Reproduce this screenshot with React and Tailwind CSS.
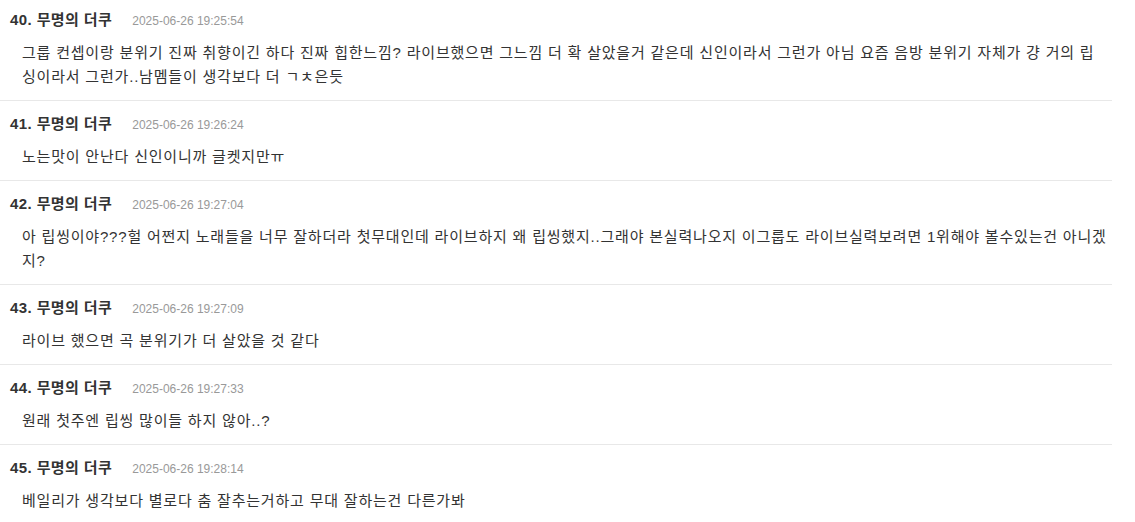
const comments = [
  {
    no: 40,
    time: "2025-06-26 19:25:54",
    text: "그룹 컨셉이랑 분위기 진짜 취향이긴 하다 진짜 힙한느낌? 라이브했으면 그느낌 더 확 살았을거 같은데 신인이라서 그런가 아님 요즘 음방 분위기 자체가 걍 거의 립싱이라서 그런가..남멤들이 생각보다 더 ㄱㅊ은듯",
  },
  { no: 41, time: "2025-06-26 19:26:24", text: "노는맛이 안난다 신인이니까 글켓지만ㅠ" },
  {
    no: 42,
    time: "2025-06-26 19:27:04",
    text: "아 립씽이야???헐 어쩐지 노래들을 너무 잘하더라 첫무대인데 라이브하지 왜 립씽했지..그래야 본실력나오지 이그룹도 라이브실력보려면 1위해야 볼수있는건 아니겠지?",
  },
  { no: 43, time: "2025-06-26 19:27:09", text: "라이브 했으면 곡 분위기가 더 살았을 것 같다" },
  { no: 44, time: "2025-06-26 19:27:33", text: "원래 첫주엔 립씽 많이들 하지 않아..?" },
  { no: 45, time: "2025-06-26 19:28:14", text: "베일리가 생각보다 별로다 춤 잘추는거하고 무대 잘하는건 다른가봐" },
];

function Comment({ no, time, text }) {
  return (
    <div className="pl-[10px] pr-[5px] pt-[13px] pb-[11px] first:pt-[10px] border-b border-[#e8e8e8]">
      <div className="flex items-baseline h-5 leading-5">
        <span className="text-[15px] font-bold tracking-[0.4px] text-[#333]">
          {no}. 무명의 더쿠
        </span>
        <span className="ml-[20px] text-[12px] text-[#999]">{time}</span>
      </div>
      <p className="mt-[11px] pl-3 text-[15px] leading-6 tracking-[0.8px] text-[#333]">{text}</p>
    </div>
  );
}

export default function App() {
  return (
    <div
      className="min-h-screen bg-white"
      style={{ fontFamily: '"Liberation Sans", "Noto Sans CJK KR", sans-serif' }}
    >
      <div className="w-[1112px]">
        {comments.map((c) => (
          <Comment key={c.no} {...c} />
        ))}
      </div>
    </div>
  );
}
